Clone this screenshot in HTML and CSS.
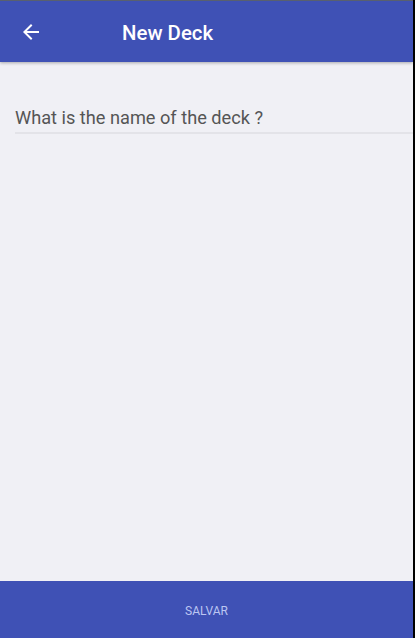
FILE: index.html
```html
<!DOCTYPE html>
<html>
<head>
<meta charset="utf-8">
<link rel="stylesheet" href="styles.css">
</head>
<body>
<div class="app">
  <header class="topbar">
    <div class="back">
      <svg width="24" height="24" viewBox="0 0 24 24"><path fill="#fff" d="M20 11H7.83l5.59-5.59L12 4l-8 8 8 8 1.41-1.41L7.83 13H20v-2z"/></svg>
    </div>
    <div class="title">New Deck</div>
  </header>
  <main class="content">
    <div class="field">What is the name of the deck ?</div>
  </main>
  <footer class="bottombar">SALVAR</footer>
</div>
</body>
</html>
```
FILE: styles.css
```css
html, body {
  margin: 0;
  padding: 0;
  height: 100%;
  background: #000;
}
.app {
  width: 413px;
  height: 638px;
  display: flex;
  flex-direction: column;
  background: #f0f0f5;
  font-family: Roboto, "Noto Sans", sans-serif;
}
.topbar {
  box-sizing: content-box;
  border-top: 1px solid #59606f;
  background: #3f51b5;
  display: flex;
  align-items: center;
  padding-top: 2px;
  height: 59px;
  box-shadow: 0 1px 3px rgba(0,0,0,0.3);
  position: relative;
  z-index: 1;
}
.back {
  width: 24px;
  height: 24px;
  margin-left: 19px;
  margin-top: -2px;
  display: flex;
}
.title {
  margin-left: 79px;
  color: #fff;
  font-size: 20.4px;
  font-weight: 500;
}
.content {
  flex: 1;
  padding-top: 42px;
  padding-left: 15px;
}
.field {
  font-size: 18.2px;
  color: #555;
  height: 28px;
  border-bottom: 2px solid #e3e3e8;
  line-height: 27px;
}
.bottombar {
  height: 57px;
  background: #3f51b5;
  color: #bcc6f2;
  font-size: 12px;
  display: flex;
  align-items: center;
  justify-content: center;
  padding-top: 2px;
  box-sizing: border-box;
}
```
